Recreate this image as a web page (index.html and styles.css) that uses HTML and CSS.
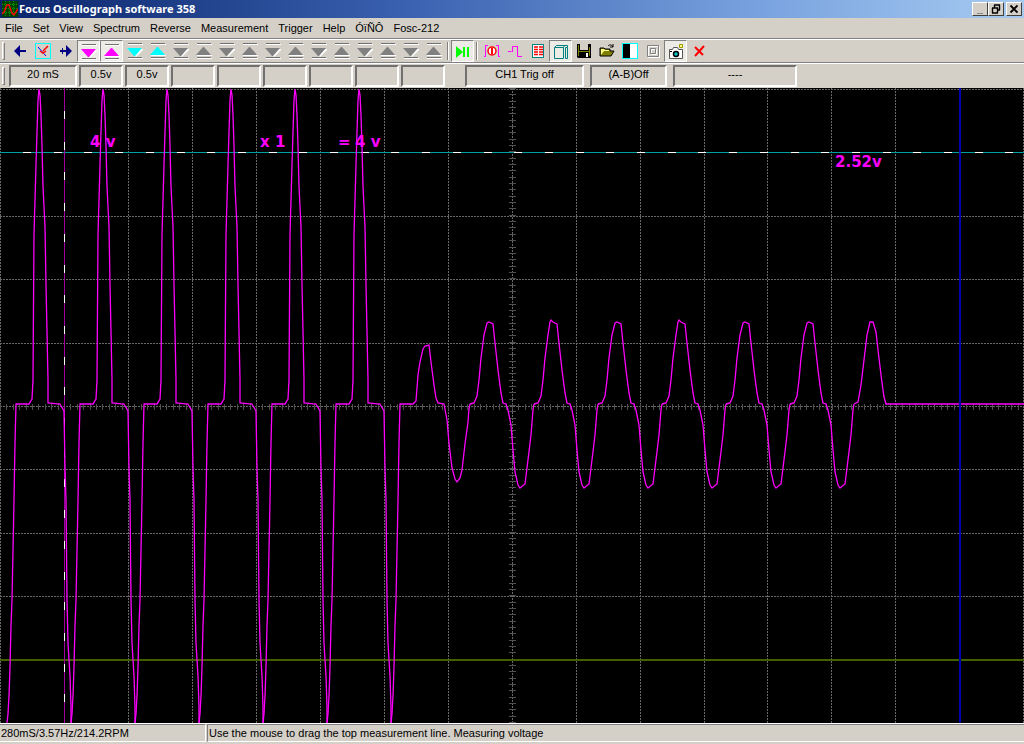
FILE: index.html
```html
<!DOCTYPE html>
<html lang="en">
<head>
    <meta charset="UTF-8">
    <title>Focus Oscillograph software 358</title>
    <link rel="stylesheet" href="styles.css">
</head>
<body>

<!-- shared icons -->
<svg class="defs" width="0" height="0">
    <symbol id="down" viewBox="0 0 16 16">
        <path d="M1 1h15v1H1zM1 15h15v1H1zM1 6h15v1L9 14z" fill="#fff"/>
        <path d="M1 0h14v1H1zM1 14h14v1H1z" fill="#707070"/>
        <path d="M0 5h15L8 13H7z" fill="currentColor"/>
    </symbol>
    <symbol id="up" viewBox="0 0 16 16">
        <path d="M1 1h15v1H1zM1 15h15v1H1zM1 12h15v1H1z" fill="#fff"/>
        <path d="M1 0h14v1H1zM1 14h14v1H1z" fill="#707070"/>
        <path d="M0 12h15L8 4H7z" fill="currentColor"/>
    </symbol>
</svg>

<div class="window">
    <div class="title">
        <svg class="logo" width="16" height="16" viewBox="0 0 16 16">
            <rect width="16" height="16" fill="#004000"/>
            <path d="M0 3.5h16M0 7.5h16M0 11.5h16M3.5 0v16M7.5 0v16M11.5 0v16" stroke="#00a000" stroke-dasharray="1 1"/>
            <path d="M0 13l2-2 3-7h2l3 8 2 2 4-6" fill="none" stroke="#f00" stroke-width="1.4"/>
        </svg>
        <h1>Focus Oscillograph software 358</h1>
        <button class="winBtn" aria-label="Minimize"><svg width="12" height="10"><path d="M3 9h6v1H3z" fill="#888"/></svg></button>
        <button class="winBtn" aria-label="Restore"><svg width="12" height="10"><path d="M4 1h6M4.500 1v3M9.500 1v5M7 6h3M2 4h6M2.500 4v5M7.500 4v5M2 9h6" fill="none" stroke="#000" stroke-width="1.400"/></svg></button>
        <button class="winBtn close" aria-label="Close"><svg width="12" height="10"><path d="M2.500 1.500l7 7M9.500 1.500l-7 7" stroke="#000" stroke-width="1.800"/></svg></button>
    </div>

    <div class="menu">
        <button>File</button>
        <button>Set</button>
        <button>View</button>
        <button>Spectrum</button>
        <button>Reverse</button>
        <button>Measurement</button>
        <button>Trigger</button>
        <button>Help</button>
        <button>ÓïÑÔ</button>
        <button>Fosc-212</button>
    </div>

    <div class="toolbar">
        <span class="grip"></span>
        <button aria-label="Left"><svg width="16" height="16"><path d="M2 8l6-6v12zM8 7h6v2H8z" fill="#000080"/></svg></button>
        <button aria-label="Center"><svg width="16" height="16"><rect x=".5" y=".5" width="15" height="15" fill="none" stroke="#0ff"/><path d="M3 4l8 9" stroke="#00f"/><path d="M13 3L8 8M5 8l3 2 3-2" fill="none" stroke="#f00" stroke-width="1.500"/></svg></button>
        <button aria-label="Right"><svg width="16" height="16"><path d="M14 8L8 2v12zM2 7h6v2H2zM4 5h1v6H4z" fill="#000080"/></svg></button>
        <button class="pressed pink" aria-label="CH1 down"><svg width="16" height="16"><use href="#down"/></svg></button>
        <button class="pressed pink" aria-label="CH1 up"><svg width="16" height="16"><use href="#up"/></svg></button>
        <button class="cyan" aria-label="CH2 down"><svg width="16" height="16"><use href="#down"/></svg></button>
        <button class="cyan" aria-label="CH2 up"><svg width="16" height="16"><use href="#up"/></svg></button>
        <button class="gray" aria-label="CH3 down"><svg width="16" height="16"><use href="#down"/></svg></button>
        <button class="gray" aria-label="CH3 up"><svg width="16" height="16"><use href="#up"/></svg></button>
        <button class="gray" aria-label="CH4 down"><svg width="16" height="16"><use href="#down"/></svg></button>
        <button class="gray" aria-label="CH4 up"><svg width="16" height="16"><use href="#up"/></svg></button>
        <button class="gray" aria-label="CH5 down"><svg width="16" height="16"><use href="#down"/></svg></button>
        <button class="gray" aria-label="CH5 up"><svg width="16" height="16"><use href="#up"/></svg></button>
        <button class="gray" aria-label="CH6 down"><svg width="16" height="16"><use href="#down"/></svg></button>
        <button class="gray" aria-label="CH6 up"><svg width="16" height="16"><use href="#up"/></svg></button>
        <button class="gray" aria-label="CH7 down"><svg width="16" height="16"><use href="#down"/></svg></button>
        <button class="gray" aria-label="CH7 up"><svg width="16" height="16"><use href="#up"/></svg></button>
        <button class="gray" aria-label="CH8 down"><svg width="16" height="16"><use href="#down"/></svg></button>
        <button class="gray" aria-label="CH8 up"><svg width="16" height="16"><use href="#up"/></svg></button>
        <span class="sep"></span>
        <button class="pressed" aria-label="Run or pause"><svg width="16" height="16"><path d="M1 2l7 6-7 6zM8 3h2v10H8zM12 3h2v10h-2z" fill="#0f0"/></svg></button>
        <span class="sep"></span>
        <button aria-label="Single trigger"><svg width="16" height="16"><path d="M0 13.500h1.500V2.500H4M12 2.500h2.500v11H16" fill="none" stroke="#f0f"/><circle cx="8" cy="8" r="4" fill="#fff" stroke="#f00" stroke-width="1.500"/><path d="M7 5h2v6H7z" fill="#f00"/></svg></button>
        <button aria-label="Edge"><svg width="16" height="16"><path d="M1 8.500h3.500M5.500 9V3.500H10M10.500 3v10.500H15" fill="none" stroke="#f0f"/></svg></button>
        <button aria-label="List"><svg width="16" height="16"><rect x="2.500" y="1.500" width="11" height="13" fill="#fff" stroke="#008080"/><path d="M4 4h4M9 4h4M4 6.500h4M9 6.500h4M4 9h4M9 9h4M4 11.500h4M9 11.500h4" stroke="#f00" stroke-width="1.500"/></svg></button>
        <button class="pressed" aria-label="Panel"><svg width="16" height="16"><path d="M1.500 3.500h9v11h-9zM12.500 3.500h2v11h-2zM1.500 3.500l2-2h11v2M10.500 3.500l1-2" fill="none" stroke="#008080"/></svg></button>
        <button aria-label="Save"><svg width="16" height="16"><path d="M1 1h14v14H2L1 14z" fill="#000"/><path d="M2 2h1v11H2zM13 4h1v9h-1zM3 8h10v1H3z" fill="#808000"/><path d="M4 1h8v6H4z" fill="#d4d0c8"/><path d="M10 10h2v4h-2z" fill="#fff"/></svg></button>
        <button aria-label="Open"><svg width="16" height="16"><path d="M1 13V5h4l1 1h5v2h4l-3 5z" fill="#808000" stroke="#000"/><path d="M2 6h3l1 1h4v1H5l-3 4z" fill="#ff8"/><path d="M9 3c2-2 4-1 5 1m0-3v3h-3" fill="none" stroke="#000"/></svg></button>
        <button aria-label="Contrast"><svg width="16" height="16"><rect x=".5" y=".5" width="15" height="15" fill="#fff" stroke="#0ff"/><path d="M1 1h7v14H1z" fill="#000"/></svg></button>
        <button aria-label="Frame"><svg width="16" height="16"><path d="M3.500 3.500h11v11h-11zM6.500 6.500h5v5h-5z" fill="none" stroke="#fff"/><path d="M2.500 2.500h11v11h-11zM5.500 5.500h5v5h-5z" fill="none" stroke="#808080"/></svg></button>
        <button class="pressed" aria-label="Snapshot"><svg width="16" height="16"><path d="M1.500 5.500h3l1-2h4l1 2h4v9h-13z" fill="#fff" stroke="#555"/><circle cx="8" cy="10" r="2.500" fill="#0cc" stroke="#000" stroke-width="1.500"/><path d="M2 7h2v1H2z" fill="#000"/><path d="M11.500 .5h3v3h-3z" fill="#ff8" stroke="#990"/></svg></button>
        <button aria-label="Exit"><svg width="16" height="16"><path d="M4 4l8 8M13 3l-9 10" stroke="#f00" stroke-width="2"/></svg></button>
    </div>

    <div class="panels">
        <span class="grip"></span>
        <output class="time">20 mS</output>
        <output>0.5v</output>
        <output>0.5v</output>
        <output></output>
        <output></output>
        <output></output>
        <output></output>
        <output></output>
        <output></output>
        <output class="trig">CH1 Trig off</output>
        <output class="diff">(A-B)Off</output>
        <output class="extra">----</output>
    </div>

    <div class="scope">
        <svg class="plot" viewBox="0 88 1024 635" preserveAspectRatio="none">
            <defs>
                <!-- one ignition pulse, 64 wide -->
                <path id="pulse" d="M7 723L8 714 9 696 10 667 11 625 12 600 14 500 15 443 16 404H29L32 399 33 380 34 235 36 165 37 132 38 100 39 89 40 95 41 115 42 146 43 186 45 227 46 284 48 380V403L60 404 64 411 65 468 66 500 67 600 68 643 70 676 71 707V723"/>
                <!-- one sine-like wave, 64 wide -->
                <path id="wave" d="M470 404L474 403 477 396 479 380 481 358 484 335 487 323 489 322 493 324 495 343 498 370 501 393 503 403 506 404 508 410 511 425 513 450 515 472 518 485 520 488 525 484 527 468 531 435 533 410 534 404"/>
                <path id="waveHigh" d="M470 404L474 403 477 396 479 380 481 358 484 335 486 322 487 320 489 322 493 324 495 343 498 370 501 393 503 403 506 404 508 410 511 425 513 450 515 472 518 485 520 488 525 484 527 468 531 435 533 410 534 404"/>
            </defs>

            <g class="grid">
                <path d="M0 89.500H1024M0 216.500H1024M0 279.500H1024M0 343.500H1024M0 406.500H1024M0 469.500H1024M0 533.500H1024M0 596.500H1024"/>
                <path d="M.5 88V723M64.500 88V723M128.500 88V723M192.500 88V723M256.500 88V723M320.500 88V723M384.500 88V723M448.500 88V723M512.500 88V723M576.500 88V723M640.500 88V723M704.500 88V723M767.500 88V723M831.500 88V723M895.500 88V723M1023.500 88V723"/>
            </g>
            <g class="ticks">
                <path d="M0 407H1024" stroke-width="6" stroke-dasharray="1 5.400"/>
                <path d="M512.500 88V723" stroke-width="7" stroke-dasharray="1 5.340"/>
            </g>

            <path class="green" d="M0 660H1024"/>
            <path class="topLine" d="M0 152.500H1024"/>
            <path class="dash" d="M23 152.500H1024"/>
            <path class="leftLine" d="M64.500 88V723"/>
            <path class="dash" d="M64.500 111V723"/>

            <g class="trace">
                <use href="#pulse"/>
                <use href="#pulse" x="64"/>
                <use href="#pulse" x="128"/>
                <use href="#pulse" x="192"/>
                <use href="#pulse" x="256"/>
                <use href="#pulse" x="320"/>
                <path d="M391 723L392 714 393 696 394 667 395 625 396 600 398 500 399 443 400 404H413L416 401 418 375 420 362 423 349 425 346 429 345 431 362 434 385 436 398 438 403 444 404 447 420 449 443 452 468 455 479 457 482 460 478 462 470 465 444 468 422 469 408 470 404"/>
                <use href="#wave"/>
                <use href="#waveHigh" x="64"/>
                <use href="#wave" x="128"/>
                <use href="#waveHigh" x="192"/>
                <use href="#wave" x="256"/>
                <use href="#wave" x="320"/>
                <path d="M854 404L858 402 861 385 864 360 867 335 870 322 873 322 876 332 878 350 881 375 884 397 886 404H1024"/>
            </g>
            <path class="blue" d="M960 88V723"/>
        </svg>
        <span class="label volts">4 v</span>
        <span class="label factor">x 1</span>
        <span class="label equals">=</span>
        <span class="label result">4 v</span>
        <span class="label cursor">2.52v</span>
    </div>

    <div class="status">
        <span class="freq">280mS/3.57Hz/214.2RPM</span>
        <span class="hint">Use the mouse to drag the top measurement line. Measuring voltage</span>
    </div>
</div>

</body>
</html>
```
FILE: styles.css
```css
* {
    padding: 0;
    margin: 0;
    box-sizing: border-box;
}
body {
    background: #d4d0c8;
    font-family: "Liberation Sans", Tahoma, sans-serif;
    font-size: 11px;
    color: #000;
}
button {
    font: inherit;
    color: inherit;
    border: none;
    background: none;
}
.defs {
    position: absolute;
}
.window {
    display: flex;
    flex-direction: column;
    height: 100vh;
    overflow: hidden;
}

/* title bar */
.title {
    display: flex;
    align-items: center;
    height: 18px;
    padding: 0 2px;
    background: linear-gradient(to right, #0a246a, #3a62b0 40%, #7aa4e0 75%, #a6caf0);
}
.title h1 {
    flex: 1;
    margin-left: 1px;
    font: bold 11px/18px "Noto Sans", sans-serif;
    color: #fff;
}
.winBtn {
    display: flex;
    align-items: center;
    justify-content: center;
    width: 16px;
    height: 14px;
    background: #d4d0c8;
    border: 1px solid;
    border-color: #fff #404040 #404040 #fff;
}
.title .close {
    margin-left: 2px;
}

/* menu */
.menu {
    display: flex;
    height: 21px;
    border-bottom: 1px solid #808080;
}
.menu button {
    padding: 0 5px;
    line-height: 20px;
}

/* toolbar */
.toolbar {
    display: flex;
    align-items: center;
    height: 24px;
    border-top: 1px solid #fff;
    border-bottom: 1px solid #808080;
}
.toolbar button {
    display: flex;
    align-items: center;
    justify-content: center;
    width: 23px;
    height: 22px;
}
.toolbar .pressed {
    background: #ecebe6;
    border: 1px solid;
    border-color: #808080 #fff #fff #808080;
    padding: 1px 0 0 1px;
}
.toolbar .pink {
    color: #f0f;
}
.toolbar .cyan {
    color: #0ff;
}
.toolbar .gray {
    color: #808080;
}
.grip {
    width: 3px;
    height: 18px;
    margin: 0 3px 0 2px;
    border: 1px solid;
    border-color: #fff #808080 #808080 #fff;
}
.sep {
    width: 2px;
    height: 18px;
    margin: 0 2px;
    border-left: 1px solid #808080;
    border-right: 1px solid #fff;
}

/* read-outs */
.panels {
    display: flex;
    align-items: center;
    gap: 2px;
    height: 25px;
    border-top: 1px solid #fff;
}
.panels .grip {
    margin-right: 2px;
}
.panels output {
    width: 44px;
    height: 22px;
    line-height: 15px;
    text-align: center;
    border: 2px solid;
    border-color: #707070 #fff #fff #707070;
}
.panels .time {
    width: 68px;
}
.panels .trig {
    width: 119px;
    margin-left: 18px;
}
.panels .diff {
    width: 77px;
    margin-left: 4px;
}
.panels .extra {
    width: 124px;
    margin-left: 4px;
}

/* oscilloscope screen */
.scope {
    position: relative;
    flex: 1;
    min-height: 0;
    background: #000;
}
.plot {
    display: block;
    width: 100%;
    height: 100%;
    fill: none;
    shape-rendering: crispEdges;
}
.grid {
    stroke: #686868;
    stroke-width: 1;
    stroke-dasharray: 2 1;
}
.ticks {
    stroke: #505050;
}
.green {
    stroke: #406000;
    stroke-width: 2;
}
.topLine {
    stroke: #00a0a0;
}
.leftLine {
    stroke: #a000a0;
}
.dash {
    stroke: #fff;
    stroke-dasharray: 8 22.700;
}
.trace {
    stroke: #f0f;
    stroke-width: 1.3;
    shape-rendering: auto;
}
.blue {
    stroke: #0000b0;
    stroke-width: 2;
}
.label {
    position: absolute;
    top: 45px;
    font: bold 15px/18px "DejaVu Sans", sans-serif;
    color: #f0f;
    white-space: pre;
}
.volts {
    left: 90px;
}
.factor {
    left: 260px;
}
.equals {
    left: 338px;
}
.result {
    left: 355px;
}
.cursor {
    left: 835px;
    top: 65px;
}

/* status bar */
.status {
    display: flex;
    height: 21px;
    padding-bottom: 2px;
    line-height: 16px;
    border-top: 1px solid #fff;
}
.status span {
    padding-left: 1px;
    border-top: 1px solid #808080;
    border-bottom: 1px solid #fff;
}
.status .freq {
    width: 206px;
    border-right: 1px solid #fff;
}
.status .hint {
    flex: 1;
    margin-left: 1px;
    border-left: 1px solid #808080;
}
```
